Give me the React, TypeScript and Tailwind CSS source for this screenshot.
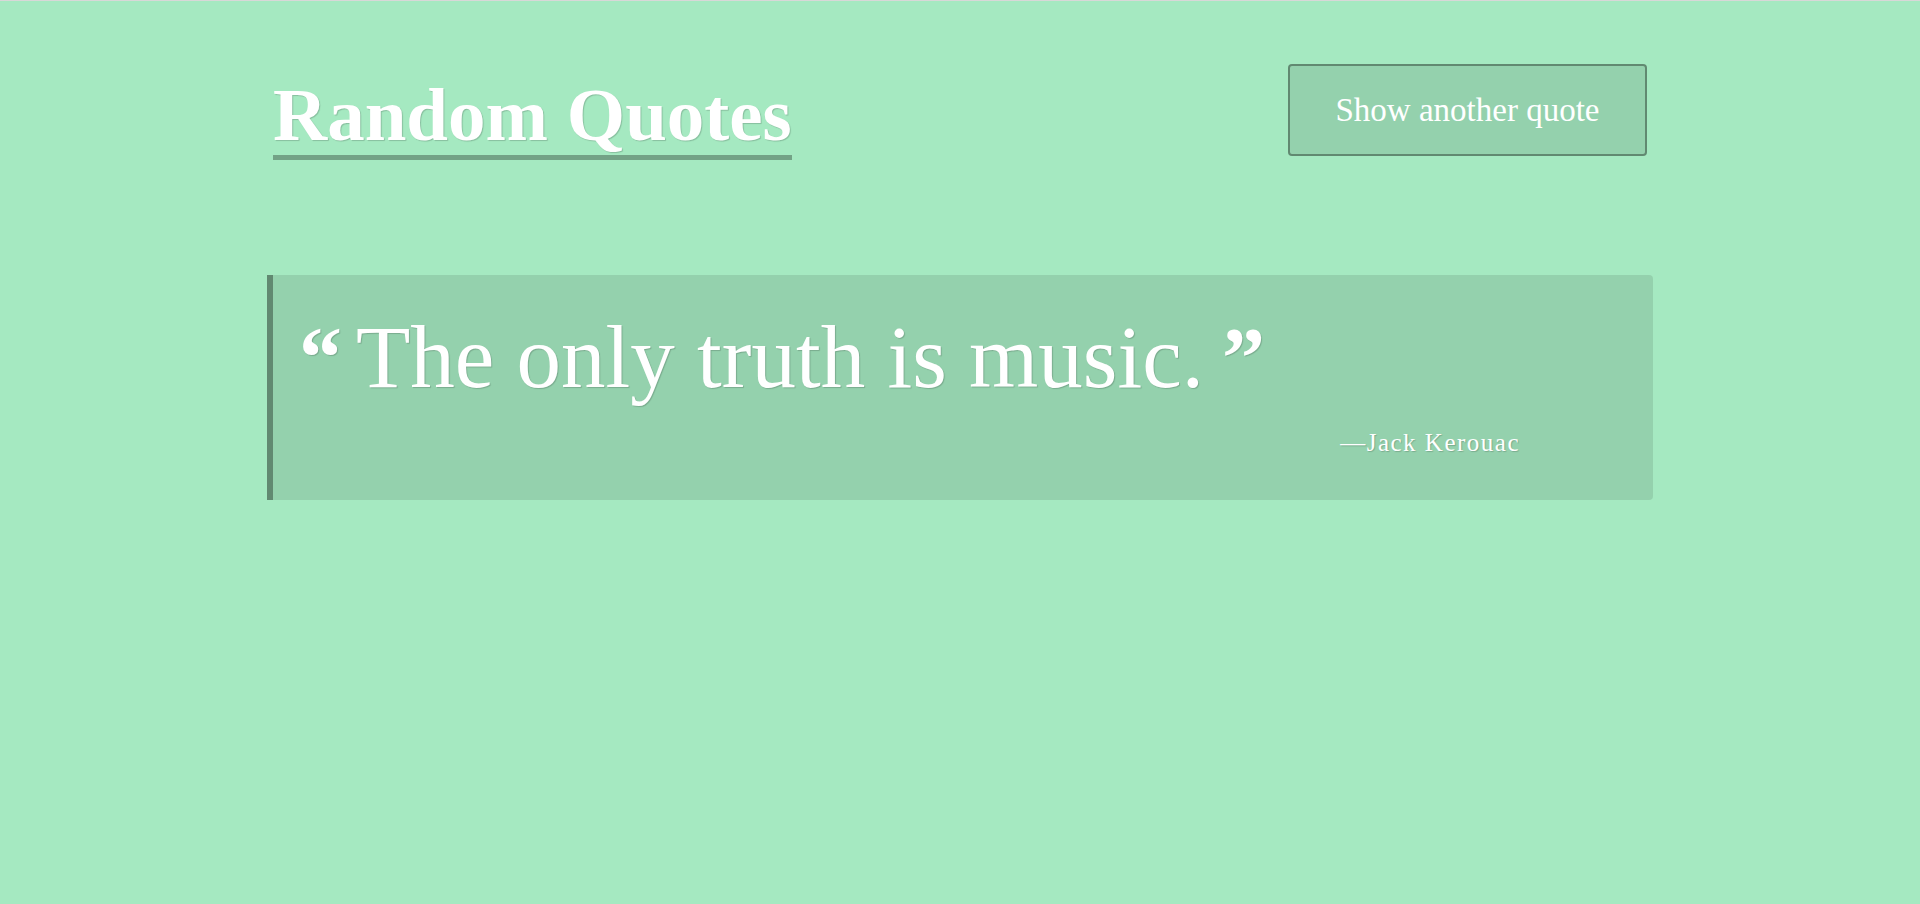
const quote = {
  text: "The only truth is music.",
  author: "Jack Kerouac",
};

export default function App() {
  return (
    <main className="min-h-screen bg-[#a5e9c1] border-t border-[#d8d8d8] text-white font-['Liberation_Serif',serif] [text-shadow:1px_1px_1px_rgba(0,0,0,0.18)]">
      <div className="w-[1386px] mx-auto">

        {/* ===== HEADER ===== */}
        <header className="flex justify-between items-start px-[6px] pt-[63px]">
          <h1 className="mt-[13px] text-[75px] leading-[75px] font-bold pb-[3px] border-b-[5px] border-black/30">
            Random Quotes
          </h1>
          <button className="w-[359px] h-[92px] rounded-[4px] border-2 border-black/35 bg-black/10 text-[33px] leading-none">
            Show another quote
          </button>
        </header>

        {/* ===== QUOTE ===== */}
        <blockquote className="mt-[115px] bg-black/10 border-l-[6px] border-black/35 rounded-r-[4px] pt-[37px] pb-[45px]">
          <p className="flex items-baseline pl-[26px] text-[89px] leading-[90px]">
            <span className="font-bold text-[86px] mr-[14px]">“</span>
            <span>{quote.text}</span>
            <span className="font-bold text-[86px] ml-[18px]">”</span>
          </p>
          <footer className="mt-[27px] pr-[133px] text-right text-[25px] leading-[25px] tracking-[1.5px]">
            —{quote.author}
          </footer>
        </blockquote>

      </div>
    </main>
  );
}
